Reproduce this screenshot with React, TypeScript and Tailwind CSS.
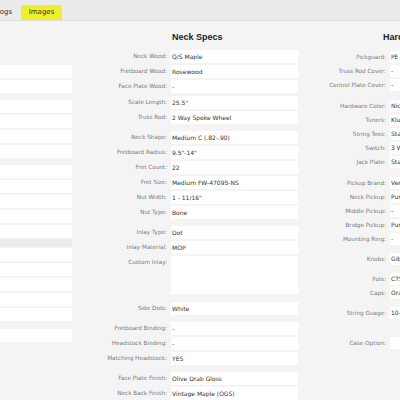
type Spec = { label: string; value: string; gap?: string; tall?: boolean };

const neckSpecs: Spec[] = [
  { label: "Neck Wood:", value: "Q/S Maple" },
  { label: "Fretboard Wood:", value: "Rosewood" },
  { label: "Face Plate Wood:", value: "-" },
  { label: "Scale Length:", value: "25.5\"", gap: "mt-[1px]" },
  { label: "Truss Rod:", value: "2 Way Spoke Wheel" },
  { label: "Neck Shape:", value: "Medium C (.82-.90)", gap: "mt-[5px]" },
  { label: "Fretboard Radius:", value: "9.5\"-14\"" },
  { label: "Fret Count:", value: "22" },
  { label: "Fret Size:", value: "Medium FW-47095-NS" },
  { label: "Nut Width:", value: "1 - 11/16\"" },
  { label: "Nut Type:", value: "Bone" },
  { label: "Inlay Type:", value: "Dot", gap: "mt-[5px]" },
  { label: "Inlay Material:", value: "MOP" },
  { label: "Custom Inlay:", value: "", tall: true },
  { label: "Side Dots:", value: "White", gap: "mt-[6px]" },
  { label: "Fretboard Binding:", value: "-", gap: "mt-[5px]" },
  { label: "Headstock Binding:", value: "-" },
  { label: "Matching Headstock:", value: "YES" },
  { label: "Face Plate Finish:", value: "Olive Drab Gloss", gap: "mt-[5px]" },
  { label: "Neck Back Finish:", value: "Vintage Maple (OGS)" },
];

const hardwareSpecs: Spec[] = [
  { label: "Pickguard:", value: "PE Black 3-Ply" },
  { label: "Truss Rod Cover:", value: "-" },
  { label: "Control Plate Cover:", value: "-" },
  { label: "Hardware Color:", value: "Nickel", gap: "mt-[7px]" },
  { label: "Tuners:", value: "Kluson Style" },
  { label: "String Tees:", value: "Standard" },
  { label: "Switch:", value: "3 Way" },
  { label: "Jack Plate:", value: "Standard" },
  { label: "Pickup Brand:", value: "Vertex", gap: "mt-[7px]" },
  { label: "Neck Pickup:", value: "Pure PAF" },
  { label: "Middle Pickup:", value: "-" },
  { label: "Bridge Pickup:", value: "Pure PAF" },
  { label: "Mounting Ring:", value: "-" },
  { label: "Knobs:", value: "Gibson Top Hat", gap: "mt-[6px]" },
  { label: "Pots:", value: "CTS", gap: "mt-[6px]" },
  { label: "Caps:", value: "Orange Drop" },
  { label: "String Guage:", value: "10-46", gap: "mt-[6px]" },
  { label: "Case Option:", value: "", gap: "mt-[16px]" },
];

const leftBoxes = [
  "mt-[44px]",
  "mt-[2px]",
  "mt-[7px]",
  "mt-[2px]",
  "mt-[2px]",
  "mt-[2px]",
  "mt-[7px]",
  "mt-[2px]",
  "mt-[2px]",
  "mt-[2px]",
  "mt-[2px]",
];

const leftBoxesLower = ["mt-[1px]", "mt-[2px]", "mt-[2px]", "mt-[2px]", "mt-[2px]", "mt-[8px]"];

const NeckRow = ({ spec }: { spec: Spec }) => (
  <div className={`flex items-start mb-[2px] ${spec.gap ?? ""}`}>
    <div className="w-[71px] shrink-0 pr-[4px] text-right text-[5.7px] leading-[13px] text-[#7a7a7a] whitespace-nowrap">
      {spec.label}
    </div>
    <div
      className={
        spec.tall
          ? "w-[127px] h-[38px] bg-white"
          : "w-[127px] h-[13px] bg-white pl-[1px] text-[6px] leading-[13px] text-[#333] whitespace-nowrap"
      }
    >
      {spec.value}
    </div>
  </div>
);

const HardwareRow = ({ spec }: { spec: Spec }) => (
  <div className={`flex items-start mb-[2px] ${spec.gap ?? ""}`}>
    <div className="w-[90px] shrink-0 pr-[4px] text-right text-[5.7px] leading-[12px] text-[#7a7a7a] whitespace-nowrap">
      {spec.label}
    </div>
    <div className="w-[110px] h-[12px] shrink-0 bg-white pl-[1px] text-[6px] leading-[12px] text-[#333] whitespace-nowrap">
      {spec.value}
    </div>
  </div>
);

export default function App() {
  return (
    <div className="w-[400px] h-[400px] overflow-hidden bg-[#f4f4f4] font-['DejaVu_Sans',sans-serif]">
      <div className="h-[21px] bg-[#ebebeb] border-b border-[#dedede] flex items-end">
        <div className="ml-[-4px] w-[22px] h-[15px] text-[7px] leading-[15px] text-[#333]">Logs</div>
        <div className="ml-[3px] w-[41px] h-[15px] rounded-t-[3px] bg-[#eef02c] text-center text-[7px] leading-[15px] text-[#333]">
          Images
        </div>
      </div>

      <div className="flex">
        <div className="w-[72px] shrink-0 flex flex-col">
          {leftBoxes.map((m, i) => (
            <div key={i} className={`h-[13px] bg-white ${m}`} />
          ))}
          <div className="mt-[1px] h-[8px] bg-[#ececec]" />
          {leftBoxesLower.map((m, i) => (
            <div key={i} className={`h-[13px] bg-white ${m}`} />
          ))}
        </div>

        <div className="ml-[28px] w-[198px] shrink-0 flex flex-col">
          <div className="h-[29px] pt-[11px] pl-[72px] text-[9px] leading-[10px] font-bold text-[#222] font-['Liberation_Sans',sans-serif]">
            Neck Specs
          </div>
          {neckSpecs.map((s) => (
            <NeckRow key={s.label} spec={s} />
          ))}
        </div>

        <div className="ml-[2px] shrink-0 flex flex-col">
          <div className="h-[30px] pt-[11px] pl-[83px] text-[9px] leading-[10px] font-bold text-[#222] whitespace-nowrap font-['Liberation_Sans',sans-serif]">
            Hardware Specs
          </div>
          {hardwareSpecs.map((s) => (
            <HardwareRow key={s.label} spec={s} />
          ))}
        </div>
      </div>
    </div>
  );
}
